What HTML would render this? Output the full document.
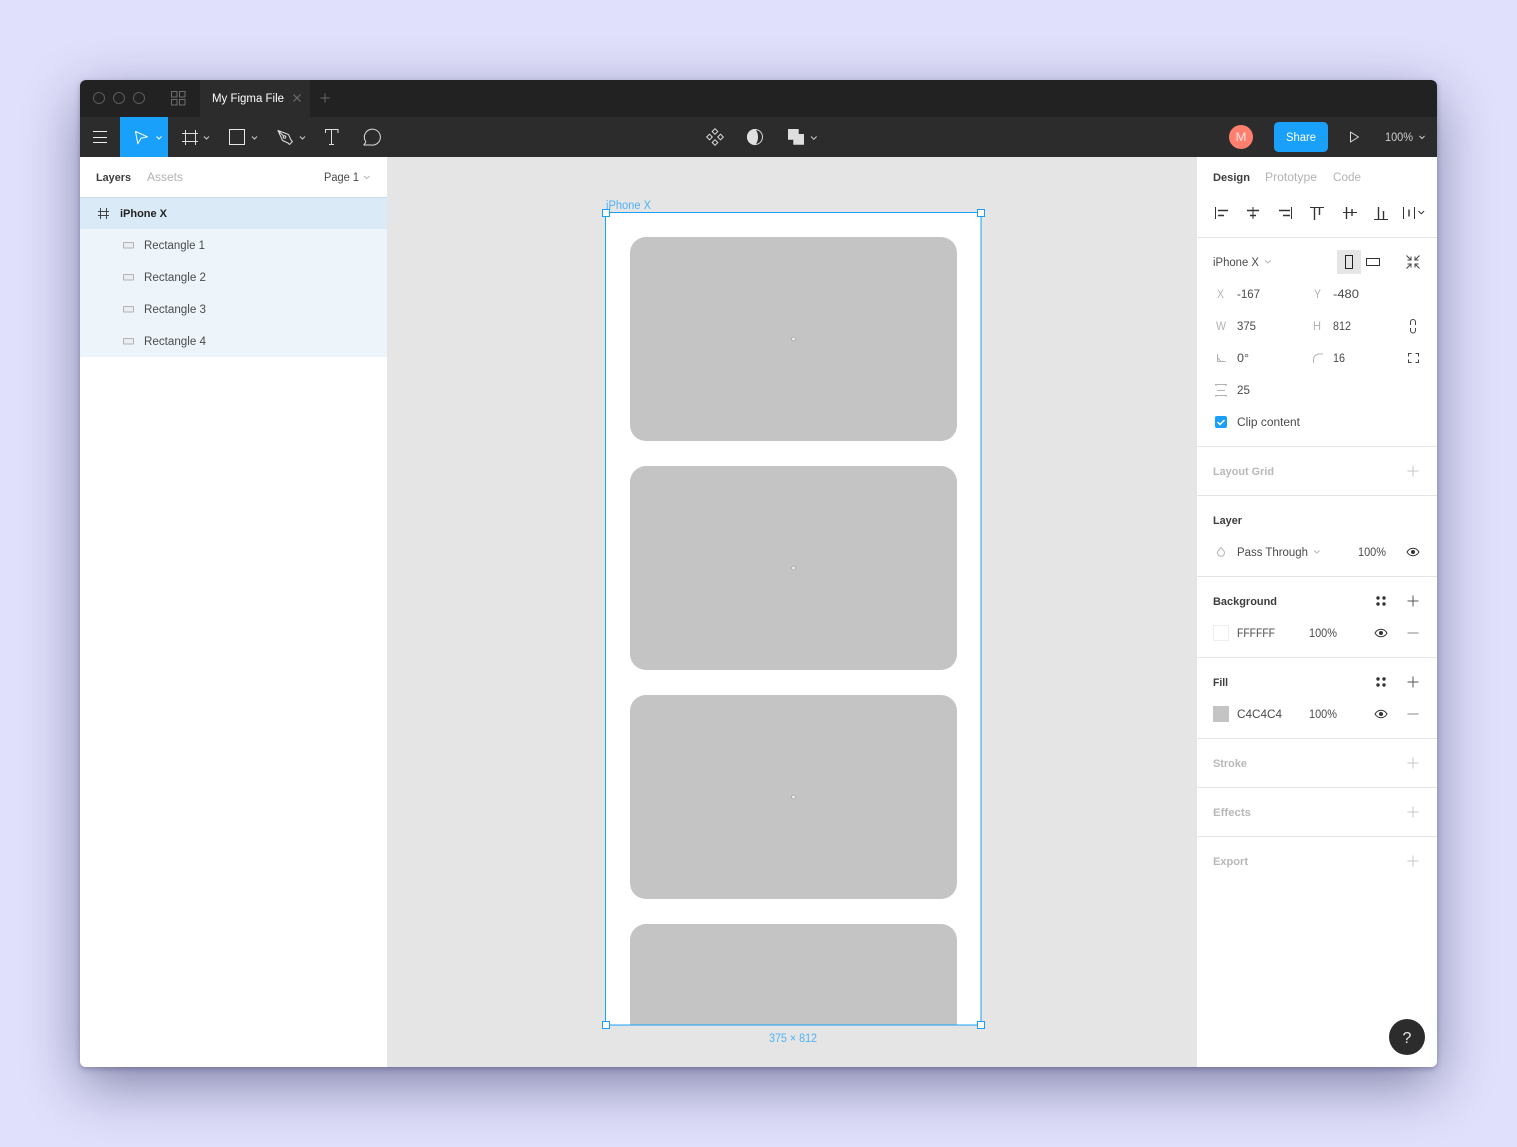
<!DOCTYPE html>
<html><head><meta charset="utf-8"><title>My Figma File</title>
<style>
html,body{margin:0;padding:0;background:#e0e0fc;width:1517px;height:1147px;overflow:hidden}
#win{position:absolute;left:80px;top:80px;width:1357px;height:987px;border-radius:6px;background:#fff;box-shadow:0 18px 56px rgba(30,30,80,.48),0 2px 6px rgba(30,30,80,.3)}
svg{position:absolute;left:0;top:0}
text{font-family:"Liberation Sans",sans-serif;font-size:11.5px;fill:#4a4a4a}
.b{font-weight:bold;fill:#3d3d3d;font-size:11px}
.g{fill:#b3b3b3}
.bg{font-weight:bold;fill:#b8b8b8;font-size:11px}
.d{stroke:#333;fill:none;stroke-width:1}
</style></head><body>
<div id="win"></div>
<svg width="1517" height="1147" viewBox="0 0 1517 1147" xmlns="http://www.w3.org/2000/svg">
<defs><clipPath id="wc"><rect x="80" y="80" width="1357" height="987" rx="6"/></clipPath></defs>
<g clip-path="url(#wc)">
<!-- bars -->
<rect x="80" y="80" width="1357" height="37" fill="#222"/>
<rect x="80" y="117" width="1357" height="40" fill="#2c2c2c"/>
<rect x="200" y="80" width="110" height="37" fill="#2c2c2c"/>
<rect x="120" y="117" width="48" height="40" fill="#18a0fb"/>
<!-- panels -->
<rect x="80" y="157" width="307" height="910" fill="#fff"/>
<rect x="387" y="157" width="810" height="910" fill="#e5e5e5"/>
<rect x="1197" y="157" width="240" height="910" fill="#fff"/>
<rect x="80" y="197" width="307" height="1" fill="#c9dbe9"/>
<rect x="80" y="198" width="307" height="31" fill="#daebf7"/>
<rect x="80" y="229" width="307" height="128" fill="#edf5fa"/>
<!-- frame -->
<rect x="606" y="213" width="375" height="812" fill="#fff"/>
<rect x="630" y="237" width="327" height="204" rx="16" fill="#c4c4c4"/>
<rect x="630" y="466" width="327" height="204" rx="16" fill="#c4c4c4"/>
<rect x="630" y="695" width="327" height="204" rx="16" fill="#c4c4c4"/>
<path d="M630 1025V940a16 16 0 0 1 16-16H941a16 16 0 0 1 16 16V1025Z" fill="#c4c4c4"/>
<rect x="605.5" y="212.5" width="375.5" height="812.5" fill="none" stroke="#18a0fb" stroke-width="1"/>
<g fill="#e8e8e8" stroke="#999" stroke-width=".6"><circle cx="793.5" cy="339" r="1.9"/><circle cx="793.5" cy="568" r="1.9"/><circle cx="793.5" cy="797" r="1.9"/></g>
<g fill="#fff" stroke="#18a0fb" stroke-width="1"><rect x="602.5" y="209.500" width="7" height="7"/><rect x="977.5" y="209.500" width="7" height="7"/><rect x="602.5" y="1021.500" width="7" height="7"/><rect x="977.5" y="1021.500" width="7" height="7"/></g>
<text x="606" y="209" textLength="45" lengthAdjust="spacingAndGlyphs" style="fill:#4eb3f7">iPhone X</text>
<text x="769" y="1042" textLength="48" lengthAdjust="spacingAndGlyphs" style="fill:#4eb3f7">375 × 812</text>
<!-- title bar icons -->
<g fill="none" stroke="#5a5a5a"><circle cx="99" cy="98" r="5.5"/><circle cx="119" cy="98" r="5.5"/><circle cx="139" cy="98" r="5.5"/></g>
<g fill="none" stroke="#6e6e6e"><rect x="171.5" y="91.5" width="5.5" height="5.5"/><rect x="179.5" y="91.5" width="5.5" height="5.5"/><rect x="171.5" y="99.5" width="5.5" height="5.5"/><rect x="179.5" y="99.5" width="5.5" height="5.5"/></g>
<text x="212" y="102" textLength="72" lengthAdjust="spacingAndGlyphs" style="fill:#fff">My Figma File</text>
<path d="M293.5 94.5l7 7M300.5 94.5l-7 7" stroke="#6e6e6e" stroke-width="1.2" fill="none"/>
<path d="M325 93.5v9M320.5 98h9" stroke="#5e5e5e" stroke-width="1.2" fill="none"/>
<!-- toolbar icons -->
<path d="M93 131.5h14M93 137.5h14M93 142.5h14" stroke="#eee" fill="none"/>
<path d="M135.5 131.5L147.5 136.8L141 138.2L137.8 143.8Z" fill="none" stroke="#fff" stroke-linejoin="round"/>
<path d="M156.5 136.5l2.5 2.5 2.5-2.5" stroke="#fff" fill="none"/>
<path d="M185.5 130v15M195.5 130v15M182 133.5h16M182 141.5h16" stroke="#ddd" fill="none"/>
<path d="M204 136.5l2.5 2.5 2.5-2.5" stroke="#ccc" fill="none"/>
<rect x="229.5" y="129.5" width="15" height="15" fill="none" stroke="#e6e6e6"/>
<path d="M252 136.5l2.5 2.5 2.5-2.5" stroke="#ccc" fill="none"/>
<path d="M278 130.5L288.5 134.5L291 140L292.5 141.5L289.5 144.5L288 143L282.5 140.5Z M278 130.5L284 136.5" fill="none" stroke="#ddd" stroke-linejoin="round"/>
<circle cx="284.5" cy="137" r="1.3" fill="none" stroke="#ddd"/>
<path d="M300 136.5l2.5 2.5 2.5-2.5" stroke="#ccc" fill="none"/>
<path d="M325.5 133v-3.500h12.500V133M331.5 129.500v15M329 144.500h5" fill="none" stroke="#e0e0e0"/>
<path d="M364 144.500c.8-.8 1.800-2 1.800-2.800A8 8 0 1 1 371 145H364Z" fill="none" stroke="#e0e0e0" stroke-linejoin="round"/>
<g fill="none" stroke="#ddd"><path d="M715 128.700l2.800 2.800-2.800 2.800-2.800-2.800Z"/><path d="M709.500 134.200l2.800 2.800-2.800 2.800-2.800-2.800Z"/><path d="M720.500 134.200l2.800 2.800-2.800 2.800-2.800-2.800Z"/><path d="M715 139.700l2.800 2.800-2.800 2.800-2.800-2.800Z"/></g>
<circle cx="755" cy="137" r="7.500" fill="none" stroke="#ddd"/>
<path d="M755 129a8 8 0 0 0 0 16c2-2 3-5 3-8s-1-6-3-8Z" fill="#e0e0e0"/>
<path d="M788 129h10.700v5H804v10.700H793.300V139.700H788Z" fill="#dedede"/>
<path d="M811 136.500l2.800 2.800 2.800-2.800" stroke="#ccc" fill="none"/>
<circle cx="1241" cy="137" r="12" fill="#ff7f6e"/>
<text x="1235.500" y="141" textLength="11" lengthAdjust="spacingAndGlyphs" style="fill:#ffe3de;font-size:12px">M</text>
<rect x="1274" y="122" width="54" height="30" rx="4.500" fill="#18a0fb"/>
<text x="1286" y="141" textLength="30" lengthAdjust="spacingAndGlyphs" style="fill:#fff">Share</text>
<path d="M1350.500 132L1358.500 137L1350.500 142Z" fill="none" stroke="#ddd" stroke-linejoin="round"/>
<text x="1385" y="141" textLength="28" lengthAdjust="spacingAndGlyphs" style="fill:#ccc">100%</text>
<path d="M1419.500 136l2.500 2.500 2.500-2.500" stroke="#ccc" fill="none"/>
<!-- left panel -->
<text class="b" x="96" y="181" textLength="35" lengthAdjust="spacingAndGlyphs">Layers</text>
<text class="g" x="147" y="181" textLength="36" lengthAdjust="spacingAndGlyphs">Assets</text>
<text x="324" y="181" textLength="35" lengthAdjust="spacingAndGlyphs">Page 1</text>
<path d="M364 176l2.800 2.500 2.800-2.500" stroke="#b3b3b3" fill="none"/>
<path d="M100.500 208v11M106.500 208v11M98 211.500h11M98 215.500h11" stroke="#444" fill="none"/>
<text x="120" y="217" textLength="47" lengthAdjust="spacingAndGlyphs" class="b" style="fill:#222">iPhone X</text>
<g fill="#e8edf1" stroke="#b3b3b3"><rect x="123.500" y="242.500" width="10" height="5.500" rx=".5"/><rect x="123.500" y="274.500" width="10" height="5.500" rx=".5"/><rect x="123.500" y="306.500" width="10" height="5.500" rx=".5"/><rect x="123.500" y="338.500" width="10" height="5.500" rx=".5"/></g>
<text x="144" y="249" textLength="61" lengthAdjust="spacingAndGlyphs">Rectangle 1</text>
<text x="144" y="281" textLength="62" lengthAdjust="spacingAndGlyphs">Rectangle 2</text>
<text x="144" y="313" textLength="62" lengthAdjust="spacingAndGlyphs">Rectangle 3</text>
<text x="144" y="345" textLength="62" lengthAdjust="spacingAndGlyphs">Rectangle 4</text>
<!-- right panel -->
<text class="b" x="1213" y="181" textLength="37" lengthAdjust="spacingAndGlyphs">Design</text>
<text class="g" x="1265" y="181" textLength="52" lengthAdjust="spacingAndGlyphs">Prototype</text>
<text class="g" x="1333" y="181" textLength="28" lengthAdjust="spacingAndGlyphs">Code</text>
<path class="d" d="M1215.5 207v12"/><path d="M1218 210.500h10M1218 215.500h6" stroke="#333" stroke-width="1.4" fill="none"/>
<path class="d" d="M1253 207v12"/><path d="M1247 210.500h12M1250 215.500h6" stroke="#333" stroke-width="1.400" fill="none"/>
<path class="d" d="M1291.500 207v12"/><path d="M1279 210.500h11M1283 215.500h7" stroke="#333" stroke-width="1.400" fill="none"/>
<path class="d" d="M1310 207.500h14"/><path d="M1314.500 208v12M1319.500 208v7" stroke="#333" stroke-width="1.400" fill="none"/>
<path class="d" d="M1343 212.500h14"/><path d="M1346.500 207v12M1352 209v7" stroke="#333" stroke-width="1.400" fill="none"/>
<path class="d" d="M1374 219.500h14"/><path d="M1378.500 207v12M1383.500 211v8" stroke="#333" stroke-width="1.400" fill="none"/>
<path class="d" d="M1403.500 207v12M1414.500 207v12"/><path d="M1409 209.500v7" stroke="#333" stroke-width="1.400" fill="none"/>
<path class="d" d="M1418.500 211l2.800 2.800 2.800-2.800"/>
<text x="1213" y="266" textLength="46" lengthAdjust="spacingAndGlyphs">iPhone X</text>
<path d="M1265 260.500l2.800 2.500 2.800-2.500" stroke="#b3b3b3" fill="none"/>
<rect x="1337" y="250" width="24" height="24" fill="#e5e5e5"/>
<rect x="1345.500" y="255.500" width="7" height="13" fill="none" stroke="#222"/>
<rect x="1366.500" y="258.500" width="13" height="7" fill="none" stroke="#333"/>
<path d="M1406.500 255.500l4.500 4.500M1411 256.500v3.500h-3.500M1419.500 255.500l-4.500 4.500M1415 256.500v3.500h3.500M1406.500 268.500l4.500-4.500M1411 267.500v-3.500h-3.500M1419.500 268.500l-4.500-4.500M1415 267.500v-3.500h3.500" stroke="#444" fill="none"/>
<text class="g" x="1217" y="298" textLength="7" lengthAdjust="spacingAndGlyphs">X</text>
<text x="1237" y="298" textLength="23" lengthAdjust="spacingAndGlyphs">-167</text>
<text class="g" x="1314" y="298" textLength="7" lengthAdjust="spacingAndGlyphs">Y</text>
<text x="1333" y="298" textLength="26" lengthAdjust="spacingAndGlyphs">-480</text>
<text class="g" x="1216" y="330" textLength="10" lengthAdjust="spacingAndGlyphs">W</text>
<text x="1237" y="330" textLength="19" lengthAdjust="spacingAndGlyphs">375</text>
<text class="g" x="1313" y="330" textLength="8" lengthAdjust="spacingAndGlyphs">H</text>
<text x="1333" y="330" textLength="18" lengthAdjust="spacingAndGlyphs">812</text>
<path d="M1410.500 325v-3a2.500 2.500 0 0 1 5 0v3M1410.500 328v2.500a2.500 2.500 0 0 0 5 0V328" stroke="#444" fill="none"/>
<path d="M1217.500 354v7.500h8M1217.500 357.500l3.500 4" stroke="#b3b3b3" fill="none"/>
<text x="1237" y="362" textLength="12" lengthAdjust="spacingAndGlyphs">0°</text>
<path d="M1313.500 363v-3.500a5.500 5.500 0 0 1 5.500-5.500h4" stroke="#b3b3b3" fill="none"/>
<text x="1333" y="362" textLength="12" lengthAdjust="spacingAndGlyphs">16</text>
<path d="M1408.500 356.500v-3h3M1415.500 353.500h3v3M1408.500 359.500v3h3M1415.500 362.500h3v-3" stroke="#444" fill="none"/>
<path d="M1215 384.500h12M1216 384.500v1.500M1226 384.500v1.500M1217 390.500h8M1215 395.500h12M1216 395.500v1.500M1226 395.500v1.500" stroke="#b3b3b3" fill="none"/>
<text x="1237" y="394" textLength="13" lengthAdjust="spacingAndGlyphs">25</text>
<rect x="1215" y="416" width="12" height="12" rx="2" fill="#18a0fb"/>
<path d="M1217.500 422l2.500 2.500 4.500-4.500" stroke="#fff" stroke-width="1.500" fill="none"/>
<text x="1237" y="426" textLength="63" lengthAdjust="spacingAndGlyphs">Clip content</text>
<rect x="1197" y="237" width="240" height="1" fill="#e5e5e5"/>
<rect x="1197" y="446" width="240" height="1" fill="#e5e5e5"/>
<rect x="1197" y="495" width="240" height="1" fill="#e5e5e5"/>
<rect x="1197" y="576" width="240" height="1" fill="#e5e5e5"/>
<rect x="1197" y="657" width="240" height="1" fill="#e5e5e5"/>
<rect x="1197" y="738" width="240" height="1" fill="#e5e5e5"/>
<rect x="1197" y="787" width="240" height="1" fill="#e5e5e5"/>
<rect x="1197" y="836" width="240" height="1" fill="#e5e5e5"/>
<text class="bg" x="1213" y="475" textLength="61" lengthAdjust="spacingAndGlyphs">Layout Grid</text>
<path d="M1413 465.500v11M1407.500 471h11" stroke="#c4c4c4" fill="none"/>
<text class="b" x="1213" y="524" textLength="29" lengthAdjust="spacingAndGlyphs">Layer</text>
<path d="M1221 547.500c1.500 1.700 3.500 3.400 3.500 5.300a3.500 3.500 0 0 1-7 0c0-1.900 2-3.600 3.500-5.300Z" fill="none" stroke="#b3b3b3"/>
<text x="1237" y="556" textLength="71" lengthAdjust="spacingAndGlyphs">Pass Through</text>
<path d="M1314 550.500l2.800 2.500 2.800-2.500" stroke="#b3b3b3" fill="none"/>
<text x="1358" y="556" textLength="28" lengthAdjust="spacingAndGlyphs">100%</text>
<path d="M1407 552c3-5 9-5 12 0c-3 5-9 5-12 0Z" fill="none" stroke="#333"/><circle cx="1413" cy="552" r="2" fill="#333"/>
<text class="b" x="1213" y="605" textLength="64" lengthAdjust="spacingAndGlyphs">Background</text>
<g fill="#333"><circle cx="1378" cy="598" r="1.700"/><circle cx="1384" cy="598" r="1.700"/><circle cx="1378" cy="604" r="1.700"/><circle cx="1384" cy="604" r="1.700"/></g>
<path d="M1413 595.500v11M1407.500 601h11" stroke="#555" fill="none"/>
<rect x="1213.500" y="625.500" width="15" height="15" fill="#fff" stroke="#eee"/>
<text x="1237" y="637" textLength="38" lengthAdjust="spacingAndGlyphs">FFFFFF</text>
<text x="1309" y="637" textLength="28" lengthAdjust="spacingAndGlyphs">100%</text>
<path d="M1375 633c3-5 9-5 12 0c-3 5-9 5-12 0Z" fill="none" stroke="#333"/><circle cx="1381" cy="633" r="2" fill="#333"/>
<path d="M1407.500 633h11" stroke="#888" fill="none"/>
<text class="b" x="1213" y="686" textLength="15" lengthAdjust="spacingAndGlyphs">Fill</text>
<g fill="#333"><circle cx="1378" cy="679" r="1.700"/><circle cx="1384" cy="679" r="1.700"/><circle cx="1378" cy="685" r="1.700"/><circle cx="1384" cy="685" r="1.700"/></g>
<path d="M1413 676.500v11M1407.500 682h11" stroke="#555" fill="none"/>
<rect x="1213" y="706" width="16" height="16" fill="#c4c4c4"/>
<text x="1237" y="718" textLength="45" lengthAdjust="spacingAndGlyphs">C4C4C4</text>
<text x="1309" y="718" textLength="28" lengthAdjust="spacingAndGlyphs">100%</text>
<path d="M1375 714c3-5 9-5 12 0c-3 5-9 5-12 0Z" fill="none" stroke="#333"/><circle cx="1381" cy="714" r="2" fill="#333"/>
<path d="M1407.500 714h11" stroke="#888" fill="none"/>
<text class="bg" x="1213" y="767" textLength="34" lengthAdjust="spacingAndGlyphs">Stroke</text>
<path d="M1413 757.500v11M1407.500 763h11" stroke="#c4c4c4" fill="none"/>
<text class="bg" x="1213" y="816" textLength="38" lengthAdjust="spacingAndGlyphs">Effects</text>
<path d="M1413 806.500v11M1407.500 812h11" stroke="#c4c4c4" fill="none"/>
<text class="bg" x="1213" y="865" textLength="35" lengthAdjust="spacingAndGlyphs">Export</text>
<path d="M1413 855.500v11M1407.500 861h11" stroke="#c4c4c4" fill="none"/>
<circle cx="1407" cy="1037" r="18" fill="#2c2c2c"/>
<text x="1402.500" y="1043" style="fill:#e8e8e8;font-size:16px">?</text>
</g>
</svg>
</body></html>
